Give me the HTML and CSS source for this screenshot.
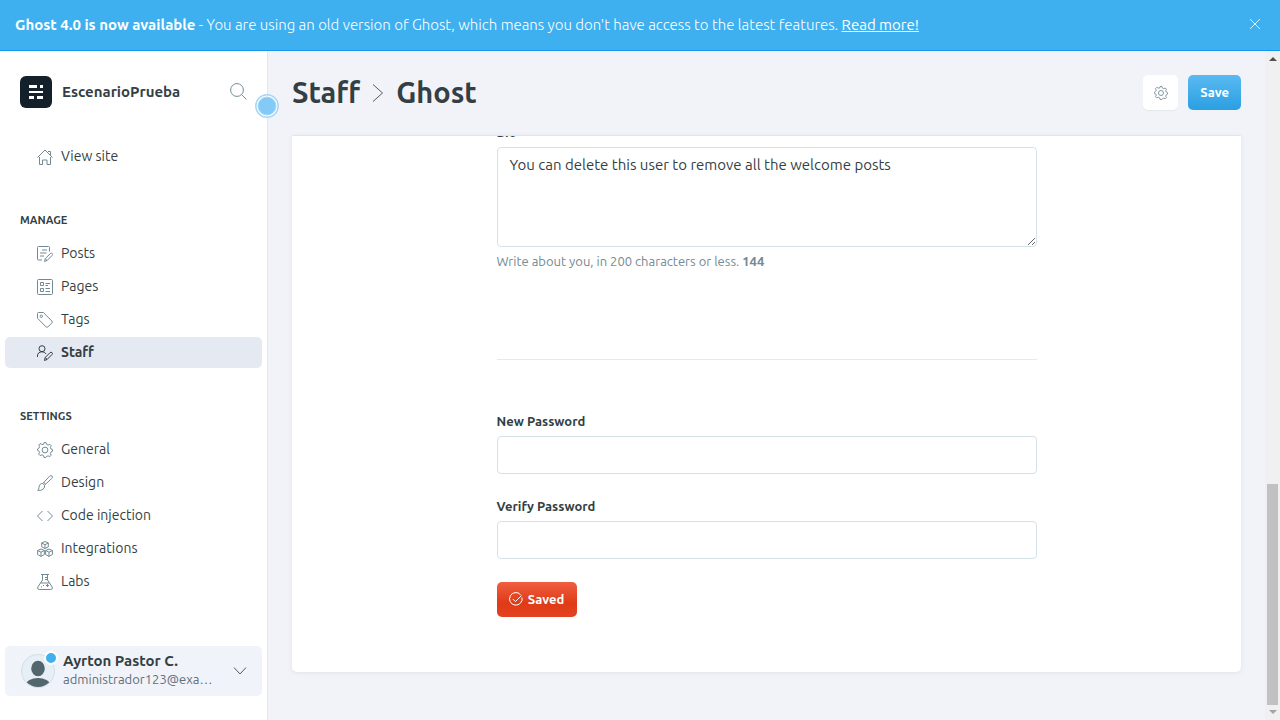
FILE: index.html
```html
<!DOCTYPE html>
<html lang="en">
<head>
<meta charset="utf-8">
<title>Staff - Ghost</title>
<link rel="stylesheet" href="styles.css">
</head>
<body>
<header class="banner">
  <p class="banner-text"><strong>Ghost 4.0 is now available</strong> - You are using an old version of Ghost, which means you don't have access to the latest features. <a href="#">Read more!</a></p>
  <button class="banner-close" type="button" aria-label="Close"><svg width="12" height="12" viewBox="0 0 12 12"><path d="M1 1l10 10M11 1L1 11"/></svg></button>
</header>
<div class="app">
  <nav class="sidebar">
    <div class="site">
      <svg class="logo" width="32" height="32" viewBox="0 0 32 32"><rect width="32" height="32" rx="6" fill="#15212a"/><path fill="#fff" d="M9 9h8v3H9zM20 9h3v3h-3zM9 15h14v2H9zM9 20h5v3H9zM17 20h6v3h-6z"/></svg>
      <span class="site-name">EscenarioPrueba</span>
      <button class="search" type="button" aria-label="Search"><svg class="icon" width="17" height="17" viewBox="0 0 17 17"><circle cx="7" cy="7" r="6.4"/><path d="M11.6 11.6l4.9 4.9"/></svg></button>
    </div>
    <ul class="menu">
      <li><a href="#"><svg class="icon" width="16" height="16" viewBox="0 0 16 16"><path d="M.5 8.500L8 1l7.500 7.500M2.500 8v7.500h3v-4.500h4.500v4.500h3.500V8M11 2.500h2.500V6"/></svg>View site</a></li>
    </ul>
    <h2 class="menu-title">Manage</h2>
    <ul class="menu">
      <li><a href="#"><svg class="icon" width="16" height="16" viewBox="0 0 16 16"><path d="M12.500 5.500v-4a1 1 0 0 0-1-1h-10a1 1 0 0 0-1 1v11.500a1 1 0 0 0 1 1H5M5 4h5M3 7h6.500M3 10h4M7.500 15.500l.8-2.900 5-5q1-1 1.900-.1t-.1 2l-5 5zM8.300 12.600l1.800 1.900"/></svg>Posts</a></li>
      <li><a href="#"><svg class="icon" width="16" height="16" viewBox="0 0 16 16"><rect x=".5" y=".5" width="15" height="15" rx="1"/><path d="M3.500 3.500h3v3h-3zM3.500 9.500h3v3h-3zM8.500 4.500H13M8.500 6.500H11M8.500 9.500H13M8.500 12.500H13"/></svg>Pages</a></li>
      <li><a href="#"><svg class="icon" width="16" height="16" viewBox="0 0 16 16"><path d="M.5 1.500v4.800L9.200 15q.8.800 1.600 0l4.200-4.200q.8-.8 0-1.600L6.300.5H1.500q-1 0-1 1z"/><circle cx="4.300" cy="4.300" r="1.200"/></svg>Tags</a></li>
      <li><a class="active" href="#" aria-current="page"><svg class="icon" width="16" height="16" viewBox="0 0 16 16"><circle cx="5" cy="3.700" r="3"/><path d="M.5 12V11q0-4 4.500-4.200 3 0 4.100 2.200M7.500 15.500l.7-3 4.800-4.800q1-1 2-.1t-.1 2l-4.700 4.800zM8.200 12.500l2 1.900"/></svg>Staff</a></li>
    </ul>
    <h2 class="menu-title">Settings</h2>
    <ul class="menu">
      <li><a href="#"><svg class="icon" width="16" height="16" viewBox="0 0 16 16"><path id="gear" d="M6.400 2.400L7 .6h2l.6 1.800 1.500.7 1.800-.8 1.300 1.400-.8 1.800.6 1.500 1.500.6v1.600l-1.500.8-.6 1.500.8 1.700-1.400 1.400-1.700-.8-1.500.7L9 15.400H7l-.6-1.900-1.500-.7-1.800.8-1.400-1.400.9-1.700-.7-1.500L.5 8.300V7l1.400-.8.7-1.500-.9-1.700 1.400-1.400 1.800.8z"/><circle cx="8" cy="8" r="2.900"/></svg>General</a></li>
      <li><a href="#"><svg class="icon" width="16" height="16" viewBox="0 0 16 16"><path d="M5.800 8.500L12.500 1.300q1.400-1.300 2.600-.3 1 1.100-.4 2.500L7.500 10.200M5.800 8.500q-1.700-.4-3 1.300-1 1.200-.8 3-.1 1.600-1.400 2.500 3.600.7 5.700-1.300 1.800-2 1.200-3.800zM6.800 7.500l1.800 1.700"/></svg>Design</a></li>
      <li><a href="#"><svg class="icon" width="16" height="16" viewBox="0 0 16 16"><path d="M5.500 3L.5 8l5 5M10.500 3l5 5-5 5"/></svg>Code injection</a></li>
      <li><a href="#"><svg class="icon" width="16" height="16" viewBox="0 0 16 16"><path d="M8 .5L11.300 2v3.800L8 7.500 4.700 5.800V2zM4.700 2L8 3.700 11.300 2M8 3.700v3.800M4 8l3.400 1.500v4L4 15.400.6 13.500v-4zM.6 9.500L4 11.200l3.400-1.700M4 11.200v4.200M12 8l3.400 1.500v4L12 15.400l-3.400-1.900v-4zM8.600 9.500L12 11.200l3.400-1.700M12 11.200v4.200"/></svg>Integrations</a></li>
      <li><a href="#"><svg class="icon" width="16" height="16" viewBox="0 0 16 16"><path d="M4 .5h8M5.500.5v5.500L.8 13q-.9 2.500 1.500 2.500h11.400q2.400 0 1.500-2.500L10.500 6V.5M8 3.500h2.500M8 5.500h2.500M3.500 9h9M10.500 10v3M9 11.500h3M4.500 12.500v1M6.500 11v1"/></svg>Labs</a></li>
    </ul>
    <button class="user" type="button">
      <span class="avatar">
        <svg width="34" height="34" viewBox="0 0 34 34"><defs><clipPath id="face"><circle cx="17" cy="17" r="16"/></clipPath></defs><circle cx="17" cy="17" r="16.500" fill="#e5eff5" stroke="#d3dfe7"/><g fill="#54666d" clip-path="url(#face)"><ellipse cx="17" cy="14.500" rx="6.800" ry="7.700"/><ellipse cx="17" cy="31" rx="12" ry="7"/></g></svg>
        <span class="dot"></span>
      </span>
      <span class="user-info"><strong>Ayrton Pastor C.</strong><span class="email">administrador123@example.com</span></span>
      <svg class="icon dark" width="14" height="10" viewBox="0 0 14 10"><path d="M1 1.500l6 6.500 6-6.500"/></svg>
    </button>
    <button class="collapse" type="button" aria-label="Collapse menu"><svg width="24" height="24" viewBox="0 0 24 24"><circle cx="12" cy="12" r="11.200" fill="#fff" stroke="#a5d7f7" stroke-width="1.500"/><circle cx="12" cy="12" r="9" fill="#84caf6" stroke="#a5d7f7"/></svg></button>
  </nav>
  <main class="main">
    <div class="heading">
      <h1 class="title"><a href="#">Staff</a><svg class="icon dark" width="12" height="20" viewBox="0 0 12 20"><path d="M1 1.500l9.500 8.500L1 18.500"/></svg>Ghost</h1>
      <div class="actions">
        <button class="btn btn-icon" type="button" aria-label="User actions"><svg class="icon" width="14" height="14" viewBox="0 0 16 16"><use href="#gear"/><circle cx="8" cy="8" r="2.900"/></svg></button>
        <button class="btn btn-blue" type="button">Save</button>
      </div>
    </div>
    <section class="card">
      <form class="form">
        <div class="field">
          <label for="bio">Bio</label>
          <textarea id="bio">You can delete this user to remove all the welcome posts</textarea>
          <p class="hint">Write about you, in 200 characters or less. <b>144</b></p>
        </div>
        <hr class="divider">
        <div class="field">
          <label for="new-password">New Password</label>
          <input id="new-password" type="password">
        </div>
        <div class="field">
          <label for="verify-password">Verify Password</label>
          <input id="verify-password" type="password">
        </div>
        <button class="btn btn-red" type="button"><svg width="14" height="14" viewBox="0 0 14 14"><path d="M13 5.500a6.300 6.300 0 1 1-1.500-2.900M3.800 7l2.600 2.600L12.500 3.500"/></svg>Saved</button>
      </form>
    </section>
  </main>
  <div class="scrollbar" aria-hidden="true">
    <svg width="15" height="15" viewBox="0 0 15 15"><path fill="#505050" d="M4 10l4-4 4 4z"/></svg>
    <span class="thumb"></span>
    <svg width="15" height="15" viewBox="0 0 15 15"><path fill="#a3a3a3" d="M4 5l4 4 4-4z"/></svg>
  </div>
</div>
</body>
</html>
```
FILE: styles.css
```css
* { box-sizing: border-box; }
body {
  margin: 0;
  height: 100vh;
  display: flex;
  flex-direction: column;
  overflow: hidden;
  background: #f2f3f8;
  color: #343f44;
  font-family: Ubuntu, "Noto Sans", "Open Sans", sans-serif;
  font-size: 14px;
}
a { color: inherit; }
button { font: inherit; color: inherit; border: 0; padding: 0; background: none; }
svg { display: block; flex: none; }
.icon { fill: none; stroke: #738a94; stroke-width: 1; }
.icon.dark { stroke: #54595d; }

.banner {
  display: flex;
  align-items: center;
  justify-content: space-between;
  flex: none;
  height: 51px;
  padding: 0 19px 2px 15px;
  background: #3eb0ef;
  border-bottom: 1px solid #139af0;
  color: #fff;
}
.banner-text { margin: 0; padding-top: 2px; font-size: 15px; line-height: 20px; font-weight: 300; white-space: nowrap; }
.banner-text strong { font-weight: 700; }
.banner-text a { font-weight: 400; }
.banner-close svg { fill: none; stroke: #d8effc; }

.app { display: flex; flex: 1; min-height: 0; }
.sidebar {
  position: relative;
  display: flex;
  flex-direction: column;
  flex: none;
  width: 268px;
  padding: 25px 5px 24px;
  background: #fff;
  border-right: 1px solid #e3e7ee;
}
.site { display: flex; align-items: center; height: 32px; margin-bottom: 33px; padding: 0 15px; }
.site-name { flex: 1; margin-left: 10px; padding-bottom: 2px; font-size: 15px; font-weight: 700; }
.search { padding-bottom: 2px; }
.menu { margin: 0; padding: 0; list-style: none; }
.menu a {
  display: flex;
  align-items: center;
  gap: 8px;
  height: 31px;
  margin-bottom: 2px;
  padding: 0 0 2px 32px;
  border-radius: 5px;
  text-decoration: none;
}
.menu a .icon { margin-top: 2px; }
.menu .active { background: #e5eaf2; font-weight: 700; }
.menu .active .icon { stroke: #343f44; }
.menu-title {
  margin: 36px 0 8px;
  padding-left: 15px;
  font-size: 11px;
  line-height: 20px;
  font-weight: 600;
  text-transform: uppercase;
}
.user {
  display: flex;
  align-items: center;
  height: 50px;
  margin-top: auto;
  padding: 0 15px 0 16px;
  border-radius: 5px;
  background: #f0f3f9;
  text-align: left;
}
.avatar { position: relative; }
.dot {
  position: absolute;
  top: -3px;
  right: -3px;
  width: 14px;
  height: 14px;
  border: 2px solid #fff;
  border-radius: 50%;
  background: #3eb0ef;
}
.user-info {
  display: flex;
  flex-direction: column;
  flex: 1;
  min-width: 0;
  margin: 0 20px 0 8px;
  padding-bottom: 2px;
  line-height: 18px;
}
.user-info strong { font-size: 15px; }
.email { overflow: hidden; font-size: 13px; color: #626d79; text-overflow: ellipsis; white-space: nowrap; }
.collapse { position: absolute; top: 43px; right: -12px; }

.main { flex: 1; min-width: 0; padding: 24px 24px 48px; }
.heading { display: flex; align-items: center; justify-content: space-between; height: 35px; margin-bottom: 25px; }
.title { display: flex; align-items: center; gap: 12px; margin: 0; font-size: 29px; line-height: 35px; font-weight: 700; }
.title a { text-decoration: none; }
.actions { display: flex; gap: 10px; }
.btn {
  display: flex;
  align-items: center;
  justify-content: center;
  gap: 5px;
  height: 35px;
  padding: 0 12px 1px;
  border-radius: 5px;
  font-size: 13px;
  font-weight: 600;
  color: #fff;
}
.btn-icon { width: 35px; padding: 0; background: #fff; box-shadow: 0 1px 1px #e3e7ee; }
.btn-blue { background: linear-gradient(#5abaf1, #2a9fe2); }
.btn-red { width: 80px; background: linear-gradient(#f05f40, #df3b17 60%, #e34220); }
.btn-red svg { fill: none; stroke: #fff; }
.card {
  overflow: hidden;
  padding: 0 24px 55px;
  border-top: 1px solid #dfe6ee;
  border-radius: 0 0 5px 5px;
  background: #fff;
  box-shadow: 0 1px 4px #dfe3ea;
}
.form { max-width: 540px; margin: -13px auto 0; }
.field { margin-bottom: 23px; }
label { display: block; margin-bottom: 5px; font-size: 13px; line-height: 19px; font-weight: 700; }
textarea, input {
  display: block;
  width: 100%;
  height: 38px;
  padding: 6px 12px;
  border: 1px solid #d4e1e8;
  border-radius: 4px;
  background: #fff;
  color: #343f44;
  font: inherit;
  font-size: 15px;
  line-height: 22px;
}
textarea { height: 100px; resize: vertical; }
.hint { margin: 5px 0 0; font-size: 13px; line-height: 19px; color: #738a94; }
.divider { height: 1px; margin: 88px 0 52px; border: 0; background: #e5eaee; }
.scrollbar { display: flex; flex-direction: column; flex: none; width: 15px; background: #f0f0f0; }
.thumb { height: 221px; margin: auto 2px 0; background: #c1c1c1; }
```
